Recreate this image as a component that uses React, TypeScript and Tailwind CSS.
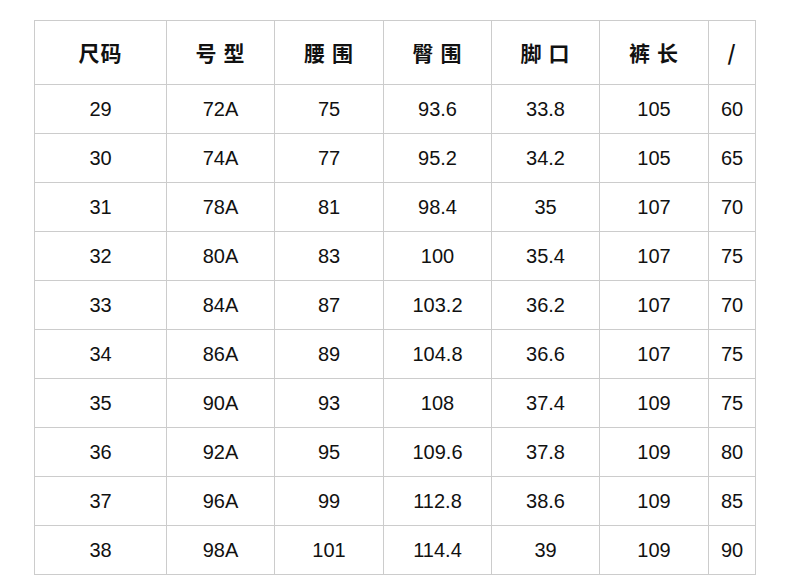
const headers = ["尺码", "号 型", "腰 围", "臀 围", "脚 口", "裤 长", "/"];

const rows = [
  ["29", "72A", "75", "93.6", "33.8", "105", "60"],
  ["30", "74A", "77", "95.2", "34.2", "105", "65"],
  ["31", "78A", "81", "98.4", "35", "107", "70"],
  ["32", "80A", "83", "100", "35.4", "107", "75"],
  ["33", "84A", "87", "103.2", "36.2", "107", "70"],
  ["34", "86A", "89", "104.8", "36.6", "107", "75"],
  ["35", "90A", "93", "108", "37.4", "109", "75"],
  ["36", "92A", "95", "109.6", "37.8", "109", "80"],
  ["37", "96A", "99", "112.8", "38.6", "109", "85"],
  ["38", "98A", "101", "114.4", "39", "109", "90"],
];

export default function App() {
  return (
    <div className="w-[790px] h-[575px] bg-white overflow-hidden">
      <div className="ml-[34px] mt-[20px] w-max grid grid-cols-[132px_108px_109px_108px_108px_109px_47px] border-l border-t border-[#cccccc] text-[#111]">
        {headers.map((h, i) => (
          <div
            key={i}
            className="h-[64px] flex items-center justify-center border-r border-b border-[#cccccc] text-[21px] font-bold tracking-[1px] whitespace-pre"
            style={{ fontFamily: '"Noto Sans CJK SC", "Liberation Sans", sans-serif' }}
          >
            {h}
          </div>
        ))}
        {rows.map((r, ri) =>
          r.map((c, ci) => (
            <div
              key={ri + "-" + ci}
              className="h-[49px] flex items-center justify-center border-r border-b border-[#cccccc] text-[20px] font-['Liberation_Sans',sans-serif]"
            >
              {c}
            </div>
          ))
        )}
      </div>
    </div>
  );
}
